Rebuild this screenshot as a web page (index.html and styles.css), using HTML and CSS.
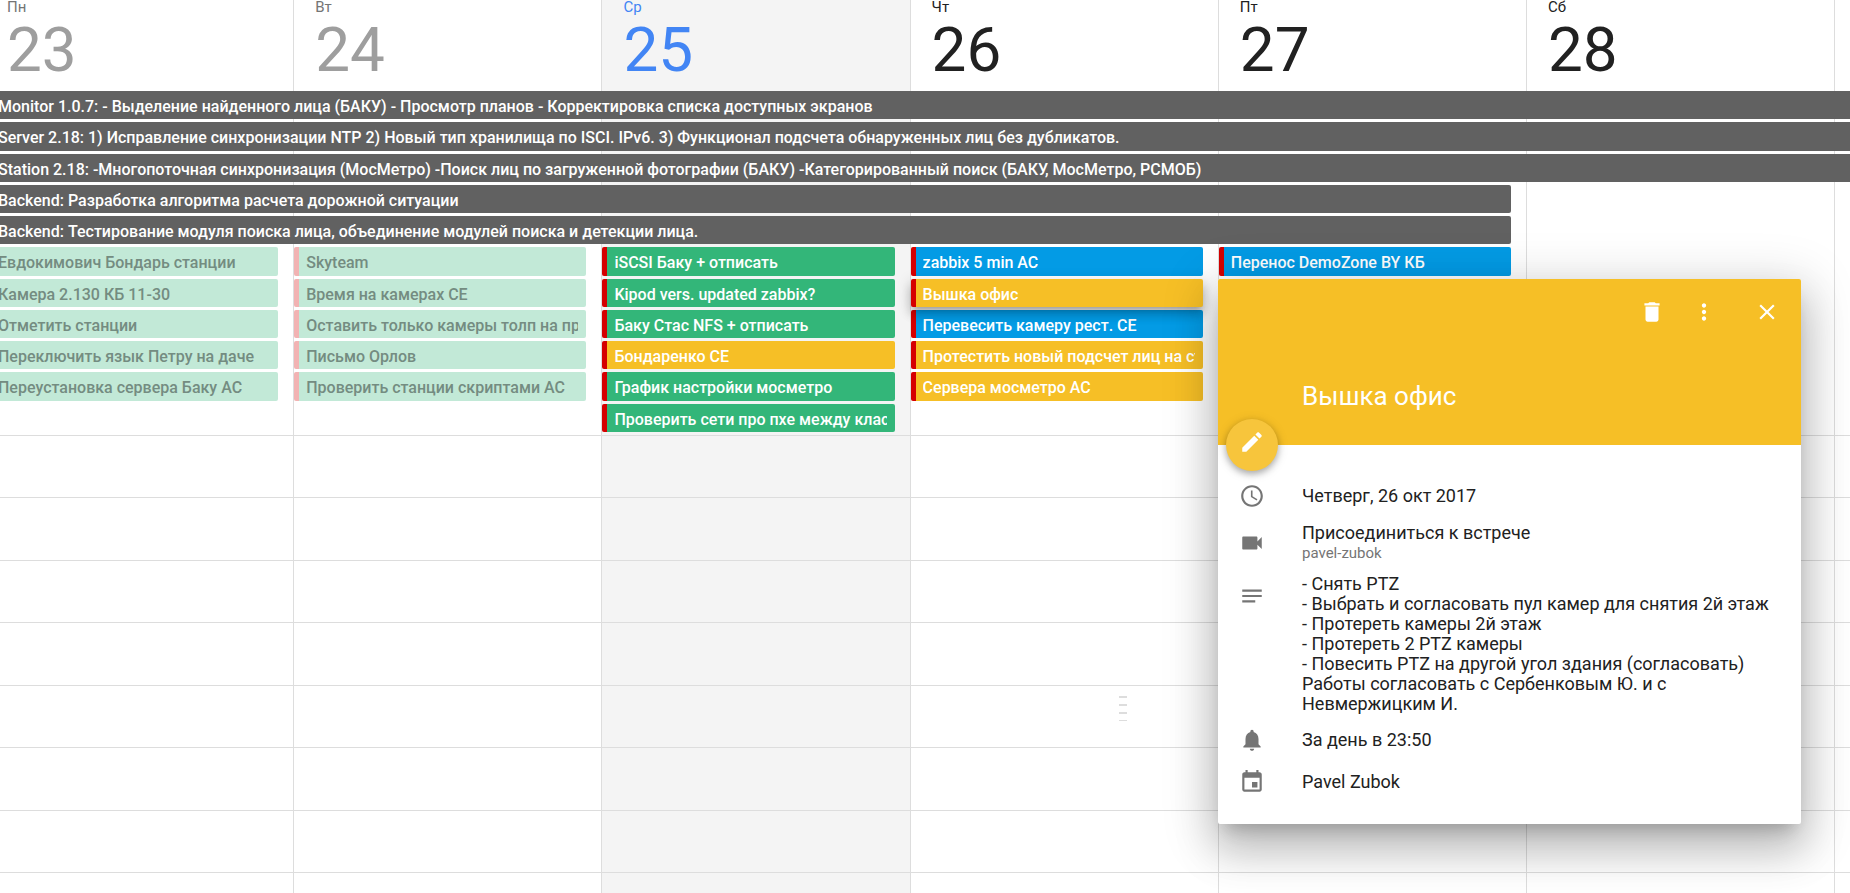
FILE: index.html
```html
<!DOCTYPE html>
<html lang="ru">
<head>
    <meta charset="UTF-8">
    <meta name="viewport" content="width=device-width, initial-scale=1.0">
    <title>Календарь</title>
    <link rel="stylesheet" href="styles.css">
</head>
<body>
    <main class="week">
        <section class="day past"><h2><span class="weekday">Пн</span><span class="date">23</span></h2></section>
        <section class="day past"><h2><span class="weekday">Вт</span><span class="date">24</span></h2></section>
        <section class="day today"><h2><span class="weekday">Ср</span><span class="date">25</span></h2></section>
        <section class="day"><h2><span class="weekday">Чт</span><span class="date">26</span></h2></section>
        <section class="day"><h2><span class="weekday">Пт</span><span class="date">27</span></h2></section>
        <section class="day"><h2><span class="weekday">Сб</span><span class="date">28</span></h2></section>
        <section class="day"></section>

        <div class="allday">
            <button class="event gray long">Monitor 1.0.7: - Выделение найденного лица (БАКУ) - Просмотр планов - Корректировка списка доступных экранов</button>
            <button class="event gray long">Server 2.18: 1) Исправление синхронизации NTP 2) Новый тип хранилища по ISCI. IPv6. 3) Функционал подсчета обнаруженных лиц без дубликатов.</button>
            <button class="event gray long">Station 2.18: -Многопоточная синхронизация (МосМетро) -Поиск лиц по загруженной фотографии (БАКУ) -Категорированный поиск (БАКУ, МосМетро, РСМОБ)</button>
            <button class="event gray long to-friday">Backend: Разработка алгоритма расчета дорожной ситуации</button>
            <button class="event gray long to-friday">Backend: Тестирование модуля поиска лица, объединение модулей поиска и детекции лица.</button>

            <div class="events">
                <button class="event task done">Евдокимович Бондарь станции</button>
                <button class="event task done">Камера 2.130 КБ 11-30</button>
                <button class="event task done">Отметить станции</button>
                <button class="event task done">Переключить язык Петру на даче</button>
                <button class="event task done">Переустановка сервера Баку АС</button>
            </div>
            <div class="events">
                <button class="event task done">Skyteam</button>
                <button class="event task done">Время на камерах СЕ</button>
                <button class="event task done">Оставить только камеры толп на пр</button>
                <button class="event task done">Письмо Орлов</button>
                <button class="event task done">Проверить станции скриптами АС</button>
            </div>
            <div class="events">
                <button class="event task green">iSCSI Баку + отписать</button>
                <button class="event task green">Kipod vers. updated zabbix?</button>
                <button class="event task green">Баку Стас NFS + отписать</button>
                <button class="event task yellow">Бондаренко СЕ</button>
                <button class="event task green">График настройки мосметро</button>
                <button class="event task green">Проверить сети про пхе между клас</button>
            </div>
            <div class="events">
                <button class="event task blue">zabbix 5 min АС</button>
                <button class="event task yellow selected">Вышка офис</button>
                <button class="event task blue">Перевесить камеру рест. СЕ</button>
                <button class="event task yellow">Протестить новый подсчет лиц на ст</button>
                <button class="event task yellow">Сервера мосметро АС</button>
            </div>
            <div class="events">
                <button class="event task blue">Перенос DemoZone BY КБ</button>
            </div>
        </div>

        <div class="hours">
            <div class="hour"></div>
            <div class="hour"></div>
            <div class="hour"></div>
            <div class="hour"></div>
            <div class="hour with-handle"><span class="handle"></span></div>
            <div class="hour"></div>
            <div class="hour"></div>
            <div class="hour"></div>
        </div>
    </main>

    <article class="popup">
        <header class="popup-header">
            <div class="actions">
                <button class="icon-btn" aria-label="Удалить">
                    <svg class="icon" viewBox="0 0 24 24"><path d="M6 19c0 1.100.9 2 2 2h8c1.100 0 2-.9 2-2V7H6v12zM19 4h-3.500l-1-1h-5l-1 1H5v2h14V4z"/></svg>
                </button>
                <button class="icon-btn" aria-label="Другие действия">
                    <svg class="icon" viewBox="0 0 24 24"><path d="M12 8c1.100 0 2-.9 2-2s-.9-2-2-2-2 .9-2 2 .9 2 2 2zm0 2c-1.100 0-2 .9-2 2s.9 2 2 2 2-.9 2-2-.9-2-2-2zm0 6c-1.100 0-2 .9-2 2s.9 2 2 2 2-.9 2-2-.9-2-2-2z"/></svg>
                </button>
                <button class="icon-btn close" aria-label="Закрыть">
                    <svg class="icon" viewBox="0 0 24 24"><path d="M19 6.410L17.590 5 12 10.590 6.410 5 5 6.410 10.590 12 5 17.590 6.410 19 12 13.410 17.590 19 19 17.590 13.410 12z"/></svg>
                </button>
            </div>
            <h1>Вышка офис</h1>
            <button class="edit" aria-label="Изменить">
                <svg class="icon" viewBox="0 0 24 24"><path d="M3 17.250V21h3.750L17.810 9.940l-3.750-3.750L3 17.250zM20.710 7.040c.39-.39.39-1.020 0-1.410l-2.340-2.340c-.39-.39-1.020-.39-1.410 0l-1.830 1.830 3.750 3.750 1.830-1.830z"/></svg>
            </button>
        </header>
        <div class="details">
            <div class="row">
                <svg class="icon" viewBox="0 0 24 24"><path d="M11.990 2C6.470 2 2 6.480 2 12s4.470 10 9.990 10C17.520 22 22 17.520 22 12S17.520 2 11.990 2zM12 20c-4.420 0-8-3.580-8-8s3.580-8 8-8 8 3.580 8 8-3.580 8-8 8zm.5-13H11v6l5.250 3.150.75-1.230-4.500-2.670z"/></svg>
                <p>Четверг, 26 окт 2017</p>
            </div>
            <div class="row meeting">
                <svg class="icon" viewBox="0 0 24 24"><path d="M17 10.500V7c0-.55-.45-1-1-1H4c-.55 0-1 .45-1 1v10c0 .55.45 1 1 1h12c.55 0 1-.45 1-1v-3.500l4 4v-11l-4 4z"/></svg>
                <p><a href="#">Присоединиться к встрече</a><small>pavel-zubok</small></p>
            </div>
            <div class="row notes">
                <svg class="icon" viewBox="0 0 24 24"><path d="M3 6h18v2H3zM3 11h18v2H3zM3 16h12v2H3z"/></svg>
                <p>- Снять PTZ<br>- Выбрать и согласовать пул камер для снятия 2й этаж<br>- Протереть камеры 2й этаж<br>- Протереть 2 PTZ камеры<br>- Повесить PTZ на другой угол здания (согласовать)<br>Работы согласовать с Сербенковым Ю. и с Невмержицким И.</p>
            </div>
            <div class="row reminder">
                <svg class="icon" viewBox="0 0 24 24"><path d="M12 22c1.100 0 2-.9 2-2h-4c0 1.100.89 2 2 2zm6-6v-5c0-3.070-1.640-5.640-4.500-6.320V4c0-.83-.67-1.500-1.500-1.500s-1.500.67-1.500 1.500v.68C7.630 5.360 6 7.920 6 11v5l-2 2v1h16v-1l-2-2z"/></svg>
                <p>За день в 23:50</p>
            </div>
            <div class="row">
                <svg class="icon" viewBox="0 0 24 24"><path d="M17 12h-5v5h5v-5zM16 1v2H8V1H6v2H5c-1.110 0-1.990.9-1.990 2L3 19c0 1.100.89 2 2 2h14c1.100 0 2-.9 2-2V5c0-1.100-.9-2-2-2h-1V1h-2zm3 18H5V8h14v11z"/></svg>
                <p>Pavel Zubok</p>
            </div>
        </div>
    </article>
</body>
</html>
```
FILE: styles.css
```css
* {
    box-sizing: border-box;
}
body {
    margin: 0;
    height: 100vh;
    overflow: hidden;
    position: relative;
    font-family: Roboto, Arial, sans-serif;
    color: #212121;
    background-color: #fff;
}
h1, h2, p {
    margin: 0;
    font-weight: 400;
}
button {
    font-family: inherit;
    border: none;
    cursor: pointer;
}

/* week grid */
.week {
    display: grid;
    grid-template-columns: repeat(6, 16.66vw) 1fr;
    grid-template-rows: 91px 38.5vh auto;
    margin-left: -15px;
}
.day {
    grid-row: 1 / 4;
    border-left: 1px solid #ddd;
    padding-left: 21px;
}
.day:nth-child(1) { grid-column: 1; }
.day:nth-child(2) { grid-column: 2; }
.day:nth-child(3) { grid-column: 3; }
.day:nth-child(4) { grid-column: 4; }
.day:nth-child(5) { grid-column: 5; }
.day:nth-child(6) { grid-column: 6; }
.day:nth-child(7) { grid-column: 7; padding: 0; }
.weekday {
    display: block;
    font-size: 15px;
    line-height: 14px;
}
.date {
    display: block;
    font-size: 62px;
    line-height: 71px;
}
.past .weekday { color: #757575; }
.past .date { color: #9e9e9e; }
.today {
    background-color: #f4f4f4;
    color: #4285f4;
}

/* all-day events */
.allday {
    grid-column: 1 / -1;
    grid-row: 2;
    display: grid;
    grid-template-columns: repeat(6, 16.66vw) 1fr;
    grid-template-rows: repeat(5, 3.5vh) auto;
}
.events {
    grid-row: 6;
    display: grid;
    grid-auto-rows: 3.5vh;
    align-content: start;
    padding: 0 15px 0 1px;
}
.event {
    display: block;
    min-width: 0;
    margin: 0 0 3px;
    padding: 0 8px 0 7px;
    border-radius: 2px;
    font-size: 16px;
    font-weight: 500;
    line-height: 31px;
    text-align: left;
    color: #fff;
    white-space: nowrap;
    overflow: clip;
    overflow-clip-margin: content-box;
}
.long {
    grid-column: 1 / -1;
    padding-left: 13px;
    border-radius: 0;
}
.to-friday {
    grid-column: 1 / 6;
    margin-right: 15px;
    border-radius: 0 2px 2px 0;
}
.task {
    border-left: 5px solid #d50000;
}
.gray { background-color: #616161; }
.green { background-color: #33b679; }
.blue { background-color: #039be5; }
.yellow { background-color: #f6bf26; }
.done {
    background-color: #c2e9d7;
    border-left-color: #f2b3b3;
    color: #748c81;
}
.selected {
    position: relative;
    box-shadow: 0 8px 10px 1px rgba(0, 0, 0, 0.14), 0 3px 14px 2px rgba(0, 0, 0, 0.12), 0 5px 5px -3px rgba(0, 0, 0, 0.2);
}

/* hour lines */
.hours {
    grid-column: 1 / -1;
    grid-row: 3;
}
.hour {
    height: 7vh;
    border-top: 1px solid #ddd;
}
.with-handle {
    display: grid;
    grid-template-columns: repeat(6, 16.66vw) 1fr;
}
.handle {
    grid-column: 4;
    justify-self: end;
    width: 8px;
    height: 25px;
    margin: 10px 91px 0 0;
    background: repeating-linear-gradient(#ddd 0 2px, transparent 2px 8px);
}

/* event popup */
.popup {
    position: absolute;
    top: 279px;
    right: 49px;
    width: 583px;
    border-radius: 2px;
    background-color: #fff;
    box-shadow: 0 26px 42px 3px rgba(0, 0, 0, 0.17), 0 10px 50px 9px rgba(0, 0, 0, 0.15), 0 12px 16px -8px rgba(0, 0, 0, 0.2);
}
.popup-header {
    position: relative;
    height: 166px;
    padding: 20px 21px 0 84px;
    border-radius: 2px 2px 0 0;
    background-color: #f6bf26;
    color: #fff;
}
.actions {
    display: flex;
    justify-content: flex-end;
    gap: 26px;
}
.icon {
    display: block;
    width: 26px;
    height: 26px;
    fill: currentColor;
}
.icon-btn {
    padding: 0;
    background: none;
    color: #fff;
}
.close {
    margin-left: 11px;
}
.popup-header h1 {
    margin-top: 54px;
    font-size: 26px;
    line-height: 34px;
}
.edit {
    position: absolute;
    left: 8px;
    bottom: -26px;
    width: 52px;
    height: 52px;
    padding: 0 13px 6px;
    border-radius: 50%;
    background-color: #f7c53c;
    color: #fff;
    box-shadow: 0 3px 6px rgba(0, 0, 0, 0.25), 0 2px 12px rgba(0, 0, 0, 0.15);
}
.details {
    display: flex;
    flex-direction: column;
    gap: 12px;
    padding: 38px 20px 29px 21px;
    font-size: 18px;
    line-height: 20px;
}
.row {
    display: flex;
    align-items: center;
    gap: 37px;
}
.row .icon {
    flex: none;
    color: #757575;
}
.row a {
    display: block;
    color: inherit;
    text-decoration: none;
}
.row small {
    display: block;
    font-size: 15px;
    color: #757575;
}
.meeting {
    margin: 2px 0 -1px;
}
.notes {
    align-items: flex-start;
}
.notes .icon {
    margin-top: 9px;
}
.reminder {
    margin: 1px 0 4px;
}
```
